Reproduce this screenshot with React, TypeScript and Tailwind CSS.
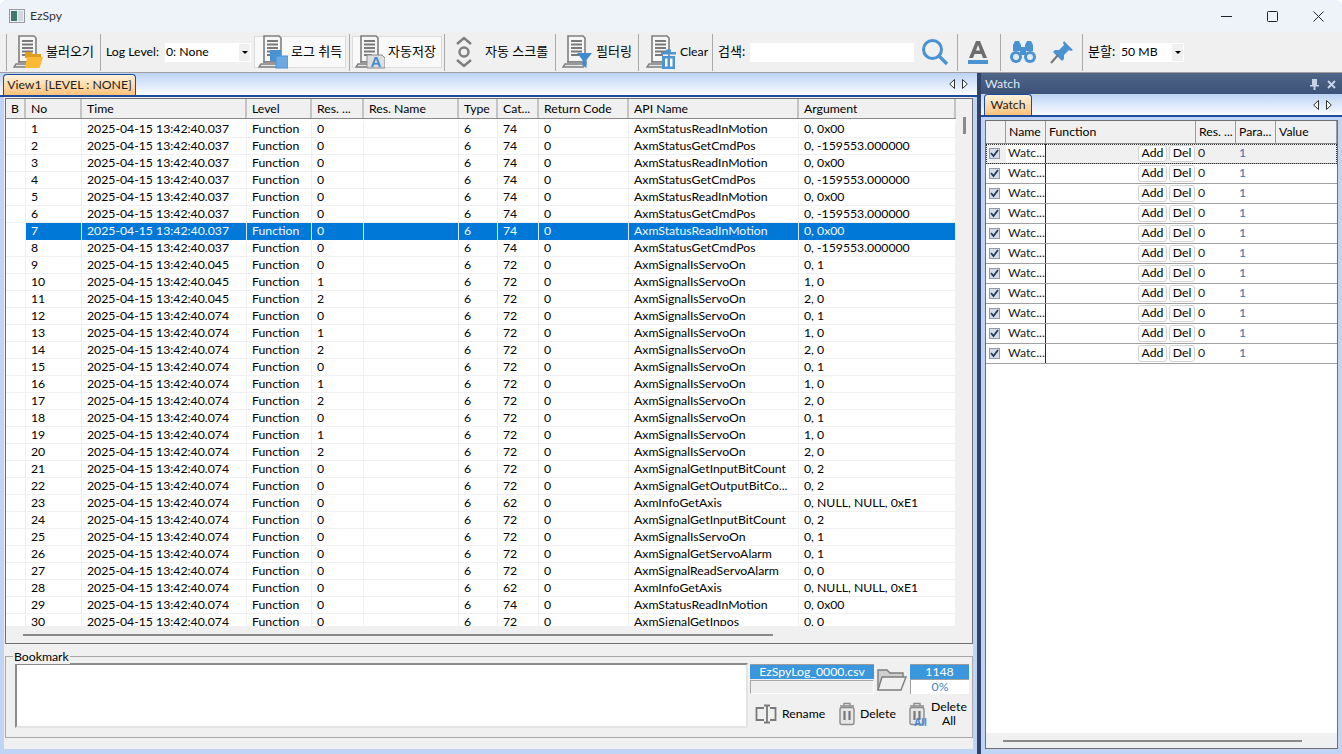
import React from "react";

const FONT = "font-['Lato','Noto_Sans_CJK_KR',sans-serif]";

const COLS = [
  { label: "B", w: "w-[20px]" },
  { label: "No", w: "w-[56px]" },
  { label: "Time", w: "w-[165px]" },
  { label: "Level", w: "w-[65px]" },
  { label: "Res. ...", w: "w-[52px]" },
  { label: "Res. Name", w: "w-[95px]" },
  { label: "Type", w: "w-[39px]" },
  { label: "Cat...", w: "w-[41px]" },
  { label: "Return Code", w: "w-[90px]" },
  { label: "API Name", w: "w-[170px]" },
  { label: "Argument", w: "w-[157px]" },
];

const READ = ["AxmStatusReadInMotion", "0, 0x00"];
const CMD = ["AxmStatusGetCmdPos", "0, -159553.000000"];

// no, time suffix, res, cat, api, arg
const ROWS: [number, string, string, string, string, string][] = [
  [1, "037", "0", "74", READ[0], READ[1]],
  [2, "037", "0", "74", CMD[0], CMD[1]],
  [3, "037", "0", "74", READ[0], READ[1]],
  [4, "037", "0", "74", CMD[0], CMD[1]],
  [5, "037", "0", "74", READ[0], READ[1]],
  [6, "037", "0", "74", CMD[0], CMD[1]],
  [7, "037", "0", "74", READ[0], READ[1]],
  [8, "037", "0", "74", CMD[0], CMD[1]],
  [9, "045", "0", "72", "AxmSignalIsServoOn", "0, 1"],
  [10, "045", "1", "72", "AxmSignalIsServoOn", "1, 0"],
  [11, "045", "2", "72", "AxmSignalIsServoOn", "2, 0"],
  [12, "074", "0", "72", "AxmSignalIsServoOn", "0, 1"],
  [13, "074", "1", "72", "AxmSignalIsServoOn", "1, 0"],
  [14, "074", "2", "72", "AxmSignalIsServoOn", "2, 0"],
  [15, "074", "0", "72", "AxmSignalIsServoOn", "0, 1"],
  [16, "074", "1", "72", "AxmSignalIsServoOn", "1, 0"],
  [17, "074", "2", "72", "AxmSignalIsServoOn", "2, 0"],
  [18, "074", "0", "72", "AxmSignalIsServoOn", "0, 1"],
  [19, "074", "1", "72", "AxmSignalIsServoOn", "1, 0"],
  [20, "074", "2", "72", "AxmSignalIsServoOn", "2, 0"],
  [21, "074", "0", "72", "AxmSignalGetInputBitCount", "0, 2"],
  [22, "074", "0", "72", "AxmSignalGetOutputBitCo...", "0, 2"],
  [23, "074", "0", "62", "AxmInfoGetAxis", "0, NULL, NULL, 0xE1"],
  [24, "074", "0", "72", "AxmSignalGetInputBitCount", "0, 2"],
  [25, "074", "0", "72", "AxmSignalIsServoOn", "0, 1"],
  [26, "074", "0", "72", "AxmSignalGetServoAlarm", "0, 1"],
  [27, "074", "0", "72", "AxmSignalReadServoAlarm", "0, 0"],
  [28, "074", "0", "62", "AxmInfoGetAxis", "0, NULL, NULL, 0xE1"],
  [29, "074", "0", "74", READ[0], READ[1]],
  [30, "074", "0", "72", "AxmSignalGetInpos", "0, 0"],
];

function DocBase() {
  return (
    <g>
      <path d="M6 1h15l2 2v24H6z" fill="#f6f6f6" stroke="#7f7f7f" strokeWidth="1.6" />
      <path d="M9 6h11M9 9.500h11M9 13h11M9 16.500h11M9 20h8" stroke="#7a7a7a" strokeWidth="1.8" />
      <path d="M5 27h19v2H3l-2 3h21" fill="#e6e6e6" stroke="#7f7f7f" strokeWidth="1.4" />
    </g>
  );
}

function ToolIcon({ kind }: { kind: "open" | "log" | "save" | "filter" | "clear" }) {
  return (
    <svg width="30" height="34" viewBox="0 0 30 34" className="shrink-0">
      <DocBase />
      {kind === "open" && (
        <g>
          <path d="M12 17h6l2 2h8v4H12z" fill="#e19e1c" />
          <path d="M14 22h16l-3.500 11H12z" fill="#fbb934" />
        </g>
      )}
      {kind === "log" && (
        <g>
          <rect x="12" y="15" width="11" height="11" fill="#4a92d4" />
          <rect x="18" y="21" width="12" height="12" fill="#6aa9e2" stroke="#4a92d4" />
        </g>
      )}
      {kind === "save" && (
        <g>
          <path d="M12 20h15l3 3v10H12z" fill="#dedede" stroke="#8a8a8a" />
          <text x="21" y="32" textAnchor="middle" fontSize="15" fontWeight="700" fill="#3f8bd0" fontFamily="Liberation Sans">A</text>
        </g>
      )}
      {kind === "filter" && <path d="M15 18h15l-5.500 7v8l-4-2.500V25z" fill="#3f8bd0" />}
      {kind === "clear" && (
        <g fill="#4d94d6">
          <path d="M15 17h15v2.500H15zM20 14.500h5V17h-5z" />
          <path d="M16 21h13v13H16z" />
          <path d="M19 23.500h2.500v8H19zM24 23.500h2.500v8H24z" fill="#fff" />
        </g>
      )}
    </svg>
  );
}

function Sep() {
  return <div className="w-px h-[37px] bg-[#a9a9a9] mx-[2px] shrink-0" />;
}

function Combo({ text, w }: { text: string; w: string }) {
  return (
    <div className={`${w} h-[19px] bg-white flex items-center justify-between pl-[1px] pr-[1px] shrink-0`}>
      <span>{text}</span>
      <span className="w-[11px] h-[17px] bg-[#f0f0f0] flex items-center justify-center">
        <span className="border-x-[3px] border-x-transparent border-t-[3px] border-t-black" />
      </span>
    </div>
  );
}

function Toolbar() {
  return (
    <div className="h-[41px] bg-[#f0f0f0] flex items-center pl-[4px] border-b border-[#a0a0a0] shrink-0 whitespace-nowrap">
      <Sep />
      <div className="flex items-center w-[89px] pl-[4px] gap-[3px] shrink-0">
        <ToolIcon kind="open" />
        <span className="text-[13px]">불러오기</span>
      </div>
      <Sep />
      <div className="flex items-center pl-[3px] w-[244px] shrink-0">
        <span className="w-[59px] shrink-0">Log Level:</span>
        <Combo text="0: None" w="w-[86px]" />
        <div className="flex items-center w-[92px] h-[32px] bg-[#f9f9f9] border border-[#dcdcdc] ml-[3px] pl-[3px] gap-[3px] shrink-0">
          <ToolIcon kind="log" />
          <span className="text-[13px]">로그 취득</span>
        </div>
      </div>
      <Sep />
      <div className="flex items-center w-[90px] h-[32px] bg-[#f9f9f9] border border-[#dcdcdc] pl-[2px] gap-[3px] shrink-0">
        <ToolIcon kind="save" />
        <span className="text-[13px]">자동저장</span>
      </div>
      <Sep />
      <div className="flex items-center w-[106px] pl-[5px] shrink-0">
        <svg width="24" height="34" viewBox="0 0 24 34" className="shrink-0">
          <path d="M5 9l7-6 7 6M5 25l7 6 7-6" fill="none" stroke="#7d7d7d" strokeWidth="2.4" />
          <circle cx="12" cy="17" r="4.500" fill="none" stroke="#7d7d7d" strokeWidth="2.4" />
        </svg>
        <span className="ml-[9px] text-[13px]">자동 스크롤</span>
      </div>
      <Sep />
      <div className="flex items-center w-[78px] pl-[4px] gap-[4px] shrink-0">
        <ToolIcon kind="filter" />
        <span className="text-[13px]">필터링</span>
      </div>
      <Sep />
      <div className="flex items-center w-[69px] pl-[5px] gap-[4px] shrink-0">
        <ToolIcon kind="clear" />
        <span>Clear</span>
      </div>
      <Sep />
      <div className="flex items-center pl-[3px] w-[240px] shrink-0">
        <span className="w-[32px] shrink-0 text-[13px]">검색:</span>
        <div className="w-[164px] h-[19px] bg-white shrink-0" />
        <div className="w-[36px] flex justify-center ml-[3px] shrink-0">
          <svg width="28" height="28" viewBox="0 0 28 28">
            <circle cx="11.500" cy="11.500" r="9" fill="none" stroke="#4a92d2" strokeWidth="3" />
            <path d="M18 18l8 8" stroke="#4a92d2" strokeWidth="3.400" />
          </svg>
        </div>
      </div>
      <Sep />
      <div className="w-[36px] flex justify-center shrink-0">
        <svg width="24" height="28" viewBox="0 0 24 28">
          <path d="M3 20L10 3h4l7 17h-4l-1.600-4H8.600L7 20zM10 12.500h4L12 7z" fill="#6d6d6d" fillRule="evenodd" />
          <rect x="2" y="22" width="20" height="4" fill="#4a92d2" />
        </svg>
      </div>
      <div className="w-[2px] shrink-0" />
      <Sep />
      <div className="w-[77px] flex items-center pl-[6px] gap-[12px] shrink-0">
        <svg width="28" height="26" viewBox="0 0 28 26" fill="#4a92d2" className="shrink-0">
          <path d="M4 6l2-4h4l2 4v6H4zM16 6l2-4h4l2 4v6h-8z" />
          <circle cx="7" cy="18" r="6" />
          <circle cx="21" cy="18" r="6" />
          <rect x="11" y="8" width="6" height="8" />
          <circle cx="7" cy="18" r="3" fill="#dcecf8" />
          <circle cx="21" cy="18" r="3" fill="#dcecf8" />
        </svg>
        <svg width="26" height="26" viewBox="0 0 26 26" className="shrink-0">
          <path d="M15 2l9 9-2 1-2-1-5 5v4l-2 2-9-9 2-2h4l5-5-1-2z" fill="#4a92d2" />
          <path d="M9 16l-7 8" stroke="#777" strokeWidth="2" />
        </svg>
      </div>
      <Sep />
      <div className="flex items-center pl-[3px] shrink-0">
        <span className="w-[32px] text-[13px] shrink-0">분할:</span>
        <Combo text="50 MB" w="w-[64px]" />
      </div>
    </div>
  );
}

function ScrollArrows({ className = "" }: { className?: string }) {
  return (
    <div className={`flex items-center gap-[7px] ${className}`}>
      <svg width="6" height="10" viewBox="0 0 6 10">
        <path d="M5.500 0.500v9L0.700 5z" fill="#f4f7fc" stroke="#333" />
      </svg>
      <svg width="6" height="10" viewBox="0 0 6 10">
        <path d="M0.500 0.500v9L5.300 5z" fill="#f4f7fc" stroke="#333" />
      </svg>
    </div>
  );
}

function TabStrip({ label, tabW, arrowsPad, h }: { label: string; tabW: string; arrowsPad: string; h: string }) {
  return (
    <div className={`${h} bg-gradient-to-b from-[#bcd3f5] to-[#fbfcff] border-b-2 border-b-[#1f4b9c] flex items-end justify-between shrink-0 text-[#222]`}>
      <div className={`${tabW} h-[21px] ml-[3px] rounded-t-[4px] border border-b-0 border-[#1f4b9c] bg-gradient-to-b from-[#fff3dc] to-[#ffc27a] flex items-center justify-center whitespace-nowrap`}>
        {label}
      </div>
      <ScrollArrows className={`self-center ${arrowsPad}`} />
    </div>
  );
}

function LogHeader() {
  return (
    <div className="flex h-[20px] shrink-0 bg-[#f0f0f0] border-b border-[#8a8a8a]">
      {COLS.map((c) => (
        <div
          key={c.label}
          className={`${c.w} ${c.label === "B" ? "justify-center" : "pl-[5px]"} pt-[1px] shrink-0 flex items-center border-r-2 border-[#c4c4c4] overflow-hidden whitespace-nowrap`}
        >
          {c.label}
        </div>
      ))}
    </div>
  );
}

function LogRow({ row }: { row: (typeof ROWS)[number] }) {
  const [no, ms, res, cat, api, arg] = row;
  const selected = no === 7;
  const cells = [
    "",
    String(no),
    `2025-04-15 13:42:40.${ms}`,
    "Function",
    res,
    "",
    "6",
    cat,
    "0",
    api,
    arg,
  ];
  return (
    <div className={`flex h-[17px] shrink-0 ${selected ? "" : "border-b border-[#f0f0f0]"}`}>
      {cells.map((text, i) => (
        <div
          key={i}
          className={`${COLS[i].w} shrink-0 pl-[5px] flex items-center overflow-hidden whitespace-nowrap leading-none ${
            selected && i > 0 ? "bg-[#0078d7] text-[#f4f8fc]" : ""
          } ${selected && i > 0 ? "border-r border-[#dbe9f7]" : "border-r border-[#f0f0f0]"}`}
        >
          {text}
        </div>
      ))}
    </div>
  );
}

function LogTable() {
  return (
    <div className="h-[546px] mt-[1px] border border-[#6f6f6f] bg-[#f0f0f0] flex flex-col shrink-0 overflow-hidden">
      <div className="flex flex-1 min-h-0">
        <div className="w-[950px] h-[527px] bg-white flex flex-col overflow-hidden">
          <LogHeader />
          <div className="h-[2px] shrink-0" />
          {ROWS.map((r) => (
            <LogRow key={r[0]} row={r} />
          ))}
        </div>
        <div className="flex-1 pt-[18px] flex justify-center">
          <div className="w-[3px] h-[17px] bg-[#8a8a8a]" />
        </div>
      </div>
      <div className="h-[16px] flex items-center pl-[17px] shrink-0">
        <div className="w-[750px] h-[2px] bg-[#8a8a8a]" />
      </div>
    </div>
  );
}

function SmallIconAction({ icon, label, w, gap }: { icon: React.ReactNode; label: React.ReactNode; w: string; gap: string }) {
  return (
    <div className={`${w} ${gap} flex items-center shrink-0`}>
      {icon}
      <span className="text-center leading-[14px]">{label}</span>
    </div>
  );
}

function Trash({ all }: { all?: boolean }) {
  return (
    <svg width="20" height="24" viewBox="0 0 20 24" className="shrink-0 overflow-visible">
      <path d="M3 4h14M7 4V1.500h6V4" fill="none" stroke="#8c8c8c" strokeWidth="1.400" />
      <rect x="3" y="5.500" width="14" height="17" rx="2" fill="#e6e6e6" stroke="#8c8c8c" strokeWidth="1.400" />
      <path d="M7.500 9v9M12.500 9v9" stroke="#777" strokeWidth="2.200" />
      {all && (
        <text x="7" y="24" fontSize="10" fontWeight="700" fill="#3f8bd0" fontFamily="Liberation Sans">All</text>
      )}
    </svg>
  );
}

function BookmarkPanel() {
  return (
    <div className="relative mt-[12px] h-[82px] border border-[#a8a8a8] flex pl-[9px] shrink-0">
      <span className="absolute left-[7px] -top-[8px] bg-[#f0f0f0] px-[1px] leading-[15px]">Bookmark</span>
      <div className="w-[733px] h-[65px] mt-[6px] bg-white border-2 border-[#8a8a8a] border-r-[#e4e4e4] border-b-[#e4e4e4] shrink-0" />
      <div className="w-[2px] shrink-0" />
      <div className="flex flex-col shrink-0 w-[220px] mt-[7px]">
        <div className="flex h-[31px]">
          <div className="w-[124px] flex flex-col shrink-0">
            <div className="h-[15px] bg-[#3a96dd] border-t border-[#9a9a9a] text-white flex items-center justify-center overflow-hidden leading-none">
              EzSpyLog_0000.csv
            </div>
            <div className="h-[14px] mt-[1px] bg-[#eeeeee] border border-[#a8a8a8] border-r-white border-b-white" />
          </div>
          <svg width="32" height="24" viewBox="0 0 32 24" className="mx-[2px] mt-[4px] shrink-0">
            <path d="M2 22V2h9l3 3h13v4" fill="#cfcfcf" stroke="#7c7c7c" strokeWidth="1.400" />
            <path d="M2 22l4-13h24l-5 13z" fill="#f0f0f0" stroke="#7c7c7c" strokeWidth="1.400" />
          </svg>
          <div className="w-[59px] flex flex-col shrink-0">
            <div className="h-[15px] bg-[#3a96dd] border-t border-[#9a9a9a] text-white flex items-center justify-center leading-none">
              1148
            </div>
            <div className="h-[15px] bg-white border-t border-l border-[#a0a0a0] text-[#3f84c4] flex items-center justify-center leading-none">
              0%
            </div>
          </div>
        </div>
        <div className="flex items-center h-[38px] pl-[5px]">
          <SmallIconAction
            w="w-[82px]"
            gap="gap-[5px]"
            label="Rename"
            icon={
              <svg width="22" height="20" viewBox="0 0 22 20" className="shrink-0">
                <path d="M9 4H1.500v12H9M15 4h5.500v12H15" fill="none" stroke="#7a7a7a" strokeWidth="1.800" />
                <path d="M9 1.500h6M12 1.500v17M9 18.500h6" fill="none" stroke="#7a7a7a" strokeWidth="1.800" />
              </svg>
            }
          />
          <SmallIconAction w="w-[70px]" gap="gap-[3px]" label="Delete" icon={<Trash />} />
          <SmallIconAction
            w="w-[60px]"
            gap="gap-[4px]"
            label={
              <>
                Delete
                <br />
                All
              </>
            }
            icon={<Trash all />}
          />
        </div>
      </div>
    </div>
  );
}

const WATCH_COLS = [
  { label: "", w: "w-[20px]" },
  { label: "Name", w: "w-[40px]" },
  { label: "Function", w: "w-[150px]" },
  { label: "Res. ...", w: "w-[40px]" },
  { label: "Para...", w: "w-[40px]" },
  { label: "Value", w: "w-[61px]" },
];

function WatchRow({ first }: { first: boolean }) {
  return (
    <div
      className={`flex h-[20px] shrink-0 items-center border-b border-[#a0a0a0] ${
        first ? "bg-[#f0f0f0] outline-1 outline-dotted outline-[#333] -outline-offset-1" : "bg-white"
      }`}
    >
      <div className="w-[20px] h-full shrink-0 flex items-center pl-[3px]">
        <span className="w-[11px] h-[11px] bg-[#d6dde8] border border-[#8c9bb0] flex items-center justify-center">
          <svg width="9" height="9" viewBox="0 0 9 9">
            <path d="M1 4l2.500 3L8 1" fill="none" stroke="#223a5c" strokeWidth="1.800" />
          </svg>
        </span>
      </div>
      <div className="w-[40px] h-full shrink-0 flex items-center bg-white pl-[2px] border-r border-[#1a1aa8] overflow-hidden whitespace-nowrap text-[#222]">
        Watc...
      </div>
      <div className="w-[150px] h-full shrink-0 bg-transparent flex items-center justify-end gap-[2px] pr-[1px]">
        <span className="w-[29px] h-[17px] bg-white border border-[#d4d4d4] rounded-[3px] flex items-center justify-center leading-none">Add</span>
        <span className="w-[26px] h-[17px] bg-white border border-[#d4d4d4] rounded-[3px] flex items-center justify-center leading-none">Del</span>
      </div>
      <div className="w-[40px] shrink-0 pl-[2px] text-[#222]">0</div>
      <div className="w-[40px] shrink-0 pl-[3px] text-[#3f6fa8]">1</div>
    </div>
  );
}

function WatchPanel() {
  return (
    <div className="w-[365px] shrink-0 flex flex-col border-l-4 border-l-[#2f4468] bg-[#c0d5f5]">
      <div className="h-[21px] bg-gradient-to-b from-[#4f6588] to-[#3c5278] text-[#dfe7f3] flex items-center justify-between pl-[4px] pr-[6px] pt-[1px] shrink-0">
        <span>Watch</span>
        <div className="flex items-center gap-[8px]">
          <svg width="9" height="11" viewBox="0 0 9 11" fill="#c8d3e4">
            <path d="M2 0h5v6h2v1.500H5.500V11h-2V7.500H0V6h2z" />
          </svg>
          <svg width="9" height="9" viewBox="0 0 9 9">
            <path d="M1 1l7 7M8 1l-7 7" stroke="#c8d3e4" strokeWidth="2" />
          </svg>
        </div>
      </div>
      <TabStrip label="Watch" tabW="w-[48px]" arrowsPad="pr-[10px]" h="h-[23px]" />
      <div className="flex-1 min-h-0 pt-[3px] pl-[4px] pr-[4px] pb-[5px] flex flex-col">
        <div className="flex-1 min-h-0 border border-[#6f6f6f] bg-white flex flex-col">
          <div className="flex h-[23px] bg-[#f0f0f0] shrink-0 border-b border-[#8a8a8a]">
            {WATCH_COLS.map((c) => (
              <div
                key={c.label}
                className={`${c.w} shrink-0 pl-[3px] flex items-center border-r border-[#9c9c9c] overflow-hidden whitespace-nowrap`}
              >
                {c.label}
              </div>
            ))}
          </div>
          <div className="flex-1 min-h-0">
            {Array.from({ length: 11 }, (_, i) => (
              <WatchRow key={i} first={i === 0} />
            ))}
          </div>
          <div className="h-[15px] bg-[#f0f0f0] flex items-center pl-[17px] shrink-0">
            <div className="w-[299px] h-[2px] bg-[#8a8a8a]" />
          </div>
        </div>
      </div>
    </div>
  );
}

export default function App() {
  return (
    <div className={`${FONT} w-[1342px] h-[754px] flex flex-col overflow-hidden bg-[#c0d5f5] rounded-t-[8px] text-[12.25px] text-black`}>
      <div className="h-[32px] bg-[#eef3fa] flex items-center justify-between shrink-0">
        <div className="flex items-center gap-[5px] pl-[9px]">
          <svg width="16" height="14" viewBox="0 0 16 14" className="shrink-0">
            <rect x="0.500" y="0.500" width="15" height="13" fill="#eef0f2" stroke="#9a9a9a" />
            <rect x="2" y="2" width="6" height="10" fill="#3d7a72" />
            <rect x="9" y="2" width="5" height="10" fill="#d0d8e0" />
          </svg>
          <span className="text-[#333]">EzSpy</span>
        </div>
        <div className="flex items-center pr-[18px] gap-[35px]">
          <svg width="11" height="11" viewBox="0 0 11 11">
            <path d="M0 5.500h11" stroke="#222" />
          </svg>
          <svg width="11" height="11" viewBox="0 0 11 11">
            <rect x="0.500" y="0.500" width="10" height="10" rx="1" fill="none" stroke="#222" />
          </svg>
          <svg width="11" height="11" viewBox="0 0 11 11">
            <path d="M0.500 0.500l10 10M10.500 0.500l-10 10" stroke="#222" />
          </svg>
        </div>
      </div>
      <Toolbar />
      <div className="flex flex-1 min-h-0">
        <div className="w-[977px] shrink-0 flex flex-col">
          <TabStrip label="View1  [LEVEL : NONE]" tabW="w-[133px]" arrowsPad="pr-[9px]" h="h-[24px]" />
          <div className="flex-1 min-h-0 mx-[4px] mb-[5px] pl-[1px] bg-[#f0f0f0]">
            <LogTable />
            <BookmarkPanel />
          </div>
        </div>
        <WatchPanel />
      </div>
    </div>
  );
}
